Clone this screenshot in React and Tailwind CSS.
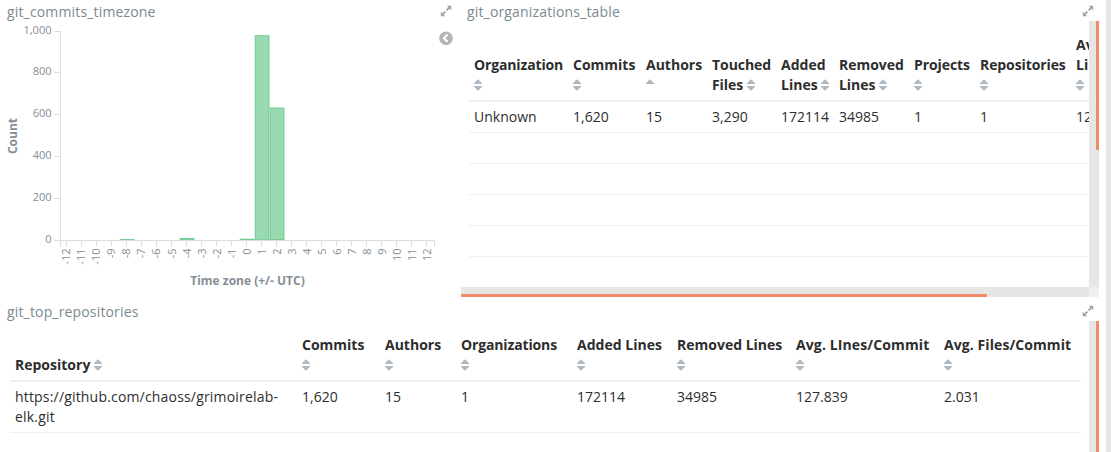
const FONT = "font-['Open_Sans','Noto_Sans',sans-serif]";

function SortIcon({ dir }) {
  return (
    <svg className="inline-block align-[-1px] h-[12px] w-[8px]" viewBox="0 0 8 12" fill="#b0b8c0">
      <path d="M3.6 0.6 H4.4 L8.2 4.4 V5 H-0.2 V4.4 Z" />
      {dir !== "asc" && <path d="M3.6 11.4 H4.4 L8.2 7.6 V7 H-0.2 V7.6 Z" />}
    </svg>
  );
}

function ExpandIcon() {
  return (
    <svg className="h-[12px] w-[12px]" viewBox="0 0 12 12" fill="#98a2aa" stroke="#98a2aa">
      <path d="M6.6 5.4 L9.2 2.8 M5.4 6.6 L2.8 9.2" strokeWidth="1.8" fill="none" />
      <path d="M6.8 0.8 H11.2 V5.2 Z M0.8 6.8 V11.2 H5.2 Z" stroke="none" />
    </svg>
  );
}

function PanelTitle({ children }) {
  return (
    <div className="flex h-[21px] shrink-0 items-center justify-between pl-[7px] pr-[5px]">
      <span className="pt-[3px] text-[14px] leading-[20px] tracking-[0.16px] text-[#7b8a8f]">{children}</span>
      <ExpandIcon />
    </div>
  );
}

function DataTable({ columns, row, blanks = 0, className }) {
  return (
    <table className={"table-fixed border-collapse text-left text-[14px] leading-[20px] text-[#2d2d2d] " + className}>
      <colgroup>
        {columns.map((c, i) => (
          <col key={i} style={{ width: c.w }} />
        ))}
      </colgroup>
      <thead>
        <tr className="border-b-2 border-[#ecf0f1]">
          {columns.map((c, i) => (
            <th key={i} className={"whitespace-nowrap p-[5px] align-bottom font-bold " + (c.track || "")}>
              {c.lines.map((l, j) => (
                <div key={j} className="h-[20px]">
                  {l}
                  {j === c.lines.length - 1 && (
                    <>
                      {l ? " " : ""}
                      <SortIcon dir={c.dir} />
                    </>
                  )}
                </div>
              ))}
            </th>
          ))}
        </tr>
      </thead>
      <tbody>
        <tr className="border-b border-[#ecf0f1]">
          {row.map((v, i) => (
            <td key={i} className={"px-[5px] pb-[5px] pt-[5px] align-top " + (columns[i].cellTrack || "")}>
              {v}
            </td>
          ))}
        </tr>
        {Array.from({ length: blanks }, (_, i) => (
          <tr key={i} className="h-[31px] border-b border-[#ecf0f1]">
            <td colSpan={columns.length} />
          </tr>
        ))}
      </tbody>
    </table>
  );
}

const orgColumns = [
  { w: 99, lines: ["Organization", ""], track: "tracking-[-0.14px]" },
  { w: 73, lines: ["Commits", ""] },
  { w: 66, lines: ["Authors", ""], dir: "asc" },
  { w: 69, lines: ["Touched", "Files"], track: "tracking-[-0.06px]" },
  { w: 58, lines: ["Added", "Lines"] },
  { w: 75, lines: ["Removed", "Lines"], track: "tracking-[-0.04px]" },
  { w: 66, lines: ["Projects", ""], track: "tracking-[-0.08px]" },
  { w: 96, lines: ["Repositories", ""], track: "tracking-[-0.1px]" },
  { w: 120, lines: ["Avg.", "Lines/Commit", ""].slice(0, 2).concat("") },
];

const repoColumns = [
  { w: 287, lines: ["Repository"], cellTrack: "tracking-[0.18px]" },
  { w: 83, lines: ["Commits", ""] },
  { w: 76, lines: ["Authors", ""] },
  { w: 116, lines: ["Organizations", ""], track: "tracking-[-0.14px]" },
  { w: 100, lines: ["Added Lines", ""], track: "tracking-[0.03px]" },
  { w: 119, lines: ["Removed Lines", ""] },
  { w: 148, lines: ["Avg. LInes/Commit", ""], track: "tracking-[0.12px]" },
  { w: 142, lines: ["Avg. Files/Commit", ""], track: "tracking-[0.08px]" },
];

const yTicks = [
  ["1,000", 31],
  ["800", 72],
  ["600", 114],
  ["400", 156],
  ["200", 198],
  ["0", 240],
];

const bars = [
  { x: 120, y: 239.5, h: 0.5 },
  { x: 180, y: 238.5, h: 1.2 },
  { x: 240, y: 239.2, h: 0.8 },
  { x: 255, y: 35.7, h: 204 },
  { x: 270, y: 108, h: 131.5 },
];

function TimezoneChart() {
  return (
    <svg className="h-[279px] w-[457px]" viewBox="0 21 457 279">
      <g fill="#57c17b" fillOpacity="0.6" stroke="#57c17b" strokeOpacity="0.75">
        {bars.map((b) => (
          <rect key={b.x} x={b.x + 0.2} y={b.y} width="13.8" height={b.h} />
        ))}
      </g>
      <g stroke="#dddddd" shapeRendering="crispEdges">
        <path d="M60.5 31 V246 M54 240.5 H435 M434.5 240 V246" fill="none" />
        {yTicks.map(([t, y]) => (
          <path key={t} d={`M54 ${y + 0.5} H60`} />
        ))}
        {Array.from({ length: 25 }, (_, i) => (
          <path key={i} d={`M${66.5 + i * 15} 240 V246`} />
        ))}
      </g>
      <g fill="#848e96" fontSize="11">
        {yTicks.map(([t, y]) => (
          <text key={t} x="51.5" y={y + 3.4} textAnchor="end">
            {t}
          </text>
        ))}
        {Array.from({ length: 25 }, (_, i) => (
          <text key={i} transform={`translate(${70.3 + i * 15.03} 248.5) rotate(-90)`} textAnchor="end">
            {i - 12}
          </text>
        ))}
      </g>
      <g fill="#848e96" fontSize="12" fontWeight="700" textAnchor="middle">
        <text transform="translate(17 136) rotate(-90)">Count</text>
        <text x="247.5" y="285">
          Time zone (+/- UTC)
        </text>
      </g>
    </svg>
  );
}

export default function App() {
  return (
    <div className={"flex h-[452px] w-[1111px] overflow-hidden bg-white " + FONT}>
      <main className="flex w-[1106px] flex-col">
        <div className="flex h-[300px]">
          <section className="relative flex w-[457px] flex-col">
            <PanelTitle>git_commits_timezone</PanelTitle>
            <TimezoneChart />
            <svg className="absolute right-[4px] top-[31px] h-[14px] w-[14px]" viewBox="0 0 14 14">
              <circle cx="7" cy="7.3" r="6.8" fill="#b4b4b4" />
              <path d="M8.4 3.6 L4.9 7.2 L8.4 10.8" fill="none" stroke="#fff" strokeWidth="2.1" />
            </svg>
          </section>
          <section className="ml-[4px] flex w-[638px] flex-col">
            <div className="-ml-px">
              <PanelTitle>git_organizations_table</PanelTitle>
            </div>
            <div className="flex h-[266px]">
              <div className="w-[628px] overflow-hidden pl-[8px] pt-[9px]">
                <DataTable
                  className="w-[722px]"
                  columns={orgColumns}
                  row={["Unknown", "1,620", "15", "3,290", "172114", "34985", "1", "1", "127.839"]}
                  blanks={4}
                />
              </div>
              <div className="flex w-[10px] justify-end bg-[#e6e6e6]">
                <div className="h-[129px] w-[3px] bg-[#f08c68]" />
              </div>
            </div>
            <div className="flex h-[10px]">
              <div className="flex w-[628px] items-end bg-[#e6e6e6]">
                <div className="h-[3px] w-[526px] bg-[#f08c68]" />
              </div>
              <div className="w-[10px] bg-[#f1f0ef]" />
            </div>
          </section>
        </div>
        <section className="flex w-[1099px] grow flex-col">
          <PanelTitle>git_top_repositories</PanelTitle>
          <div className="flex grow">
            <div className="w-[1089px] pl-[10px] pt-[9px]">
              <DataTable
                className="w-[1071px]"
                columns={repoColumns}
                row={["https://github.com/chaoss/grimoirelab-elk.git", "1,620", "15", "1", "172114", "34985", "127.839", "2.031"]}
              />
            </div>
            <div className="flex w-[10px] justify-end bg-[#e6e6e6]">
              <div className="w-[3px] bg-[#f08c68]" />
            </div>
          </div>
        </section>
      </main>
      <div className="w-[5px] bg-[#e6e6e6]" />
    </div>
  );
}
